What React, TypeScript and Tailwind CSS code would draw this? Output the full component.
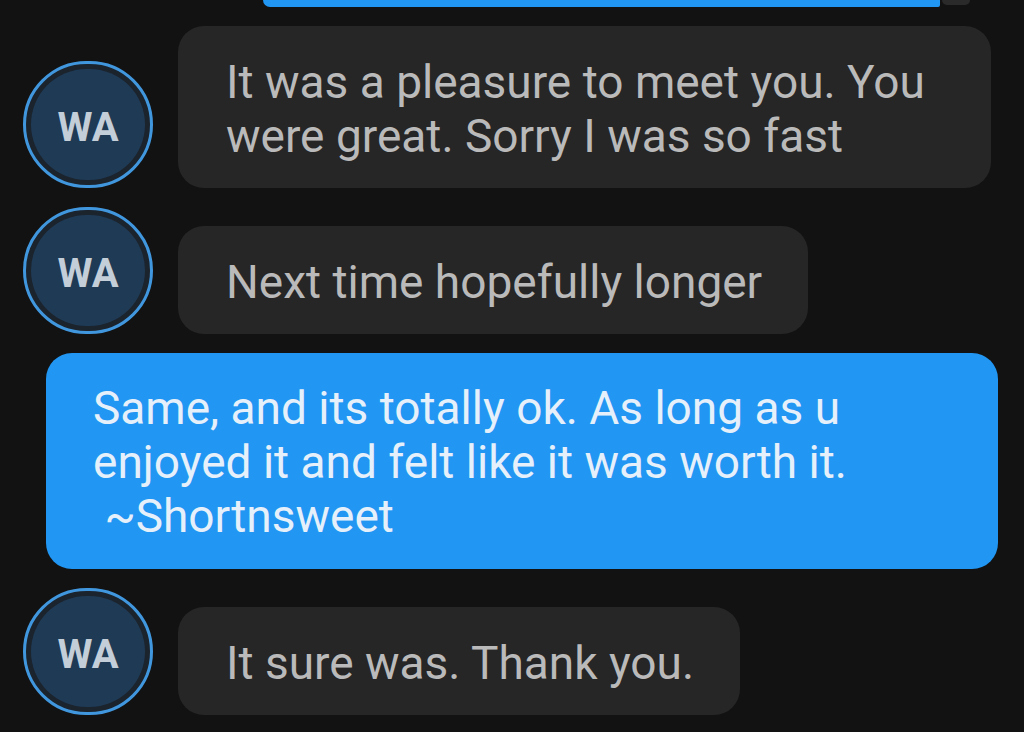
import React from "react";

function Avatar() {
  return (
    <div className="shrink-0 w-[130px] h-[127px] rounded-full border-[3px] border-[#4197de] bg-[#1b232c] p-[5px]">
      <div className="w-full h-full rounded-full bg-[#1f3a55] flex items-center justify-center">
        <span className="text-[40px] leading-none font-bold text-[#c3ced9] mt-[6px]" style={{ fontFamily: "Roboto, 'Liberation Sans', sans-serif" }}>
          WA
        </span>
      </div>
    </div>
  );
}

function GrayBubble({ children, fill }: { children: React.ReactNode; fill?: boolean }) {
  return (
    <div
      className={`${fill ? "flex-1" : ""} rounded-[26px] bg-[#262626] pl-[48px] pr-[46px] pt-[29px] pb-[25px] text-[46px] leading-[54px] text-[#bababa] whitespace-nowrap`}
    >
      {children}
    </div>
  );
}

export default function App() {
  return (
    <div
      className="w-[1024px] h-[732px] overflow-hidden bg-[#121212] flex flex-col gap-[19px]"
      style={{ fontFamily: "Roboto, 'Liberation Sans', sans-serif" }}
    >
      <div className="h-[7px] flex shrink-0 overflow-hidden">
        <div className="ml-[263px] w-[677px] h-[7px] bg-[#2196f3] rounded-bl-[14px] rounded-br-[4px]" />
        <div className="ml-[2px] w-[28px] h-[5px] bg-[#2a2a2a] rounded-bl-[14px] rounded-br-[14px]" />
      </div>

      <div className="flex items-end pl-[23px] pr-[33px] gap-[25px]">
        <Avatar />
        <GrayBubble fill>
          It was a pleasure to meet you. You
          <br />
          were great. Sorry I was so fast
        </GrayBubble>
      </div>

      <div className="flex items-end pl-[23px] pr-[33px] gap-[25px]">
        <Avatar />
        <GrayBubble>Next time hopefully longer</GrayBubble>
      </div>

      <div className="ml-[46px] mr-[26px] rounded-[26px] bg-[#2196f3] pl-[47px] pr-[40px] pt-[28px] pb-[26px] text-[46px] leading-[54px] text-[#e6f0fa] whitespace-pre">
        {"Same, and its totally ok. As long as u\nenjoyed it and felt like it was worth it.\n ~Shortnsweet"}
      </div>

      <div className="flex items-end pl-[23px] pr-[33px] gap-[25px]">
        <Avatar />
        <GrayBubble>It sure was. Thank you.</GrayBubble>
      </div>
    </div>
  );
}
